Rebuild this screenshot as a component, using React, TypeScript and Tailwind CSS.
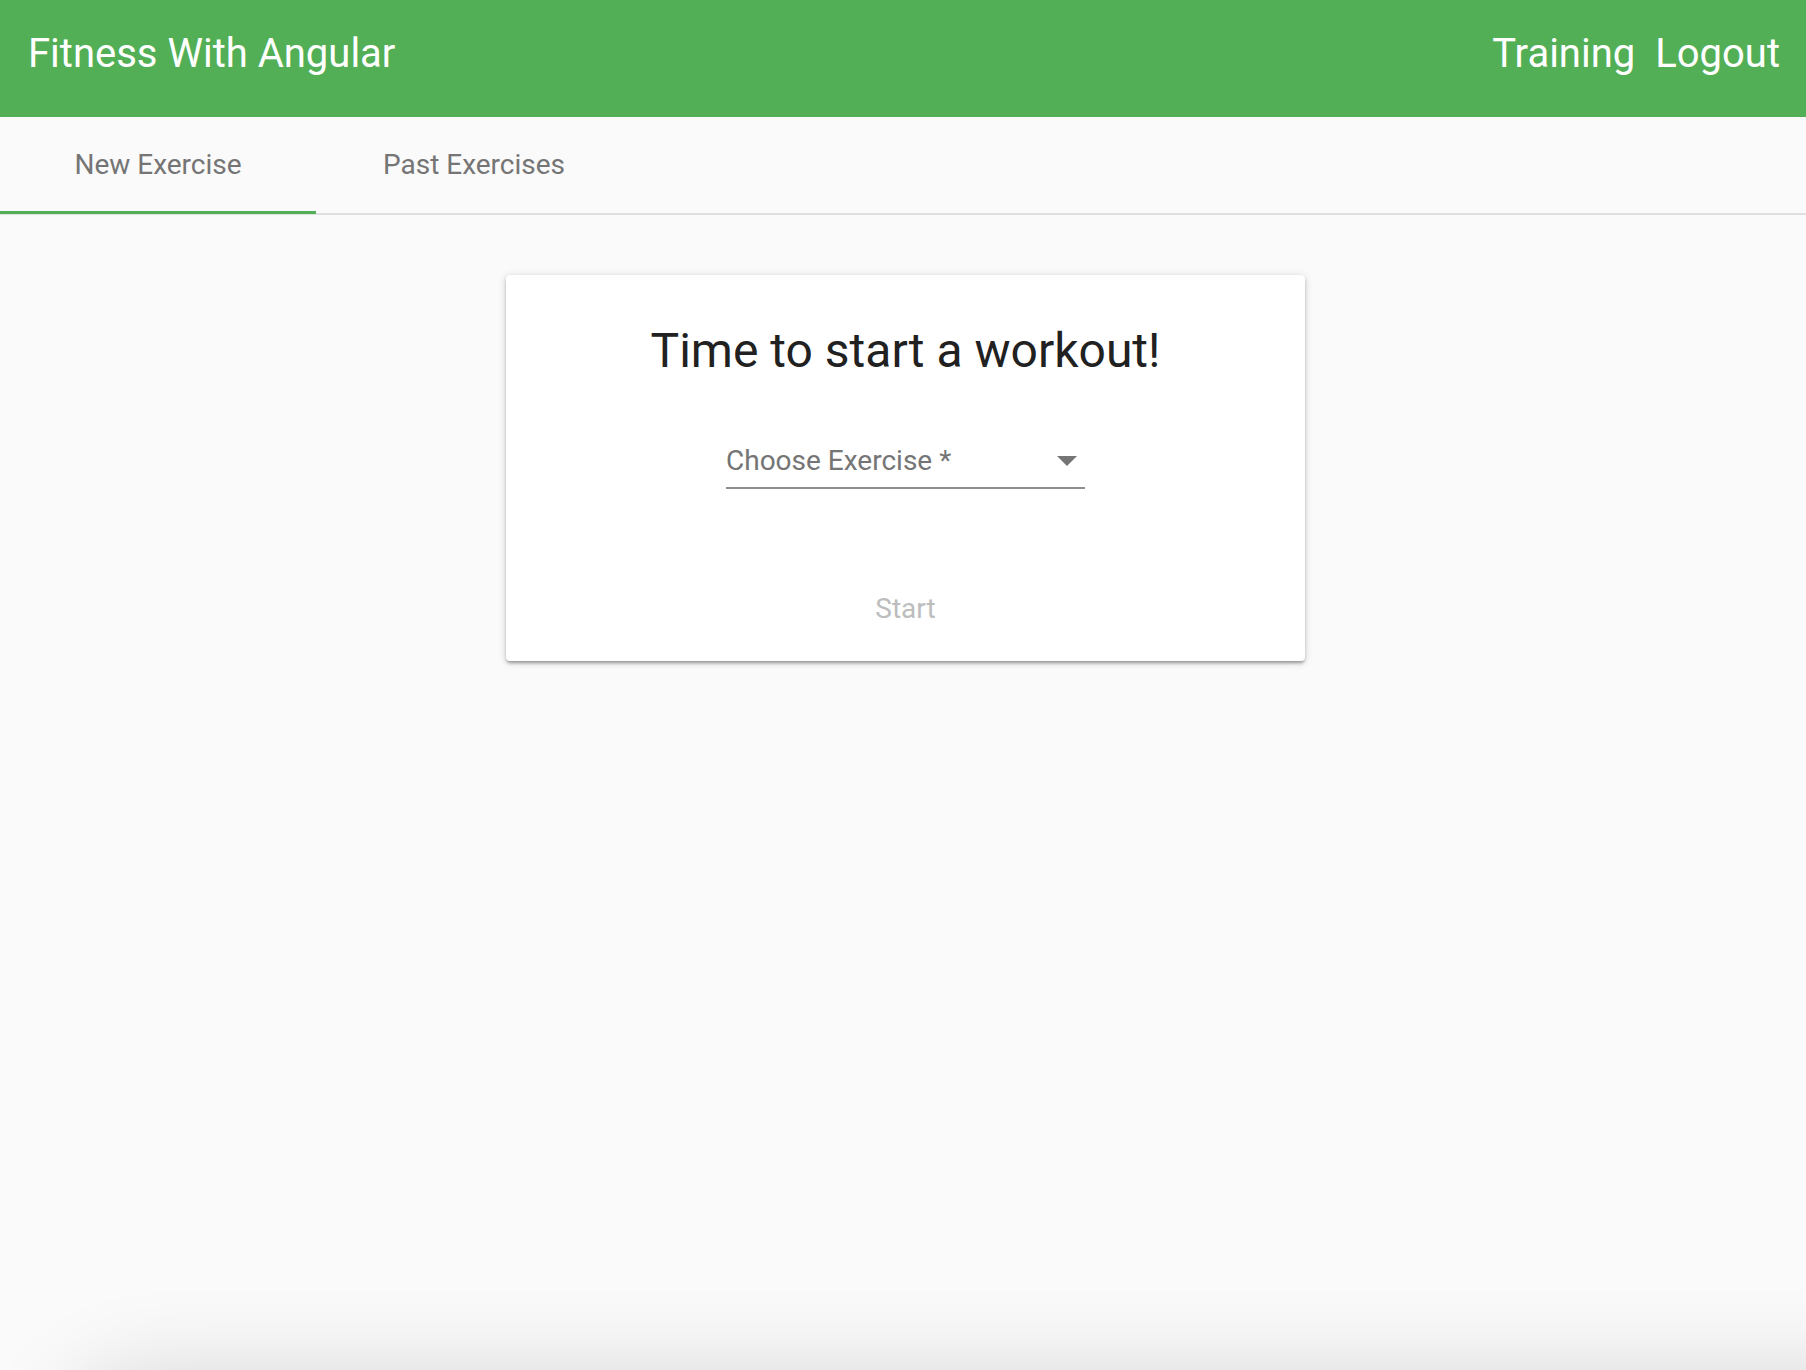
import { useState } from 'react'

const tabs = ['New Exercise', 'Past Exercises']

function Toolbar() {
  return (
    <header className="flex h-[117px] items-center justify-between bg-[#52af56] pr-[26px] pl-[28px] pb-[10px] text-[40px] text-white">
      <span>Fitness With Angular</span>
      <nav className="flex items-center gap-[20px]">
        <a href="#">Training</a>
        <a href="#">Logout</a>
      </nav>
    </header>
  )
}

function TabBar({ active, onSelect }: { active: number; onSelect: (i: number) => void }) {
  return (
    <div className="flex h-[98px] border-b-2 border-[#e0e0e0]">
      {tabs.map((label, i) => (
        <button
          key={label}
          type="button"
          onClick={() => onSelect(i)}
          className="relative flex w-[316px] items-center justify-center text-[28px] text-[#757575]"
        >
          {label}
          {active === i && <span className="absolute bottom-[-1px] left-0 h-[3px] w-full bg-[#52af56]" />}
        </button>
      ))}
    </div>
  )
}

function WorkoutCard() {
  return (
    <section className="mx-auto mt-[60px] flex w-[799px] flex-col items-center rounded-[4px] bg-white pt-[48px] pb-[34px] shadow-[0_3px_3px_-1px_rgba(0,0,0,0.25),0_2px_4px_0_rgba(0,0,0,0.14),0_1px_10px_0_rgba(0,0,0,0.12)]">
      <h1 className="text-[48px] leading-[56px] text-[#212121]">Time to start a workout!</h1>

      <div className="mt-[64px] w-[359px]">
        <div className="flex h-[36px] items-center justify-between text-[28px] leading-[36px] text-[#757575]">
          <span>Choose Exercise *</span>
          <svg width="20" height="10" viewBox="0 0 20 10" className="mr-[8px]">
            <path d="M0 0 L20 0 L10 10 Z" fill="#757575" />
          </svg>
        </div>
        <div className="mt-[8px] h-[2px] bg-[#8e8e8e]" />
      </div>

      <button type="button" disabled className="mt-[102px] text-[28px] leading-[36px] text-[#bdbdbd]">
        Start
      </button>
    </section>
  )
}

export default function App() {
  const [active, setActive] = useState(0)

  return (
    <div className="relative h-[1370px] overflow-hidden bg-[#fafafa] font-['Roboto','Liberation_Sans',sans-serif]">
      <Toolbar />
      <TabBar active={active} onSelect={setActive} />
      <main className="pl-[5px]">{active === 0 && <WorkoutCard />}</main>
      {/* window shadow creeping in from below */}
      <div className="pointer-events-none absolute top-[1400px] right-[-120px] left-[80px] h-[200px] rounded-[70px] shadow-[0_0_90px_25px_rgba(0,0,0,0.15)]" />
    </div>
  )
}
